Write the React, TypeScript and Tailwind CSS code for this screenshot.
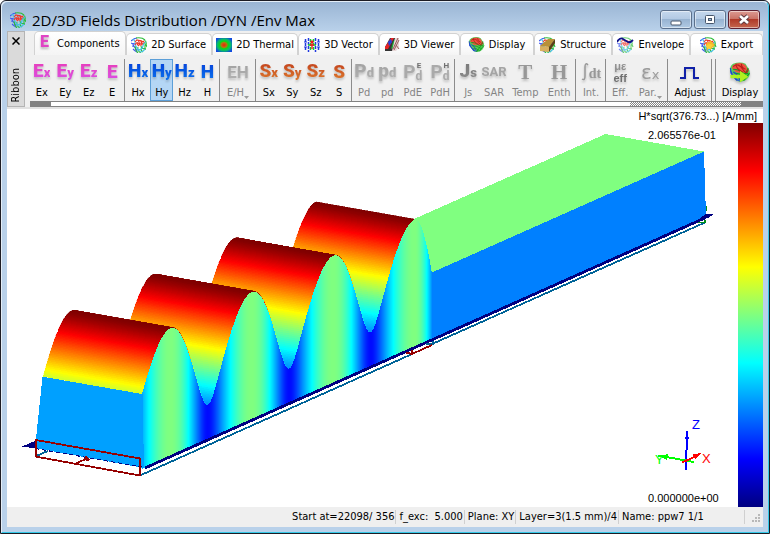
import type { ReactNode } from "react";

const UI_FONT = "font-['DejaVu_Sans_Condensed','Liberation_Sans',sans-serif]";

const App = () => (
  <div className={`min-h-screen flex flex-col rounded-t-md border border-[#1c1c24] bg-[#b9d1ea] text-[11px] leading-[14px] text-black ${UI_FONT}`}>
    <div className="flex-1 flex flex-col rounded-t-md border border-t-[#e4eef8] border-l-[#e4eef8] border-r-[#35c9e8] border-b-[#35c9e8] px-[5px] pb-[5px]">
      <TitleBar />
      <div className="flex-1 flex flex-col bg-[#f0f0f0]">
        <Ribbon />
        <Viewport />
        <StatusBar />
      </div>
    </div>
  </div>
);

const TitleBar = () => (
  <header className="-mx-[5px] flex h-[29px] items-start justify-between rounded-t-md bg-gradient-to-b from-[#9ab5d4] to-[#b9d1ea] pl-2 pr-2">
    <div className="flex items-center gap-[6px] pt-[7px]">
      <FieldIcon />
      <h1 className="font-['Open_Sans','Noto_Sans',sans-serif] text-[15px] leading-[22px] whitespace-nowrap">
        2D/3D Fields Distribution /DYN /Env Max
      </h1>
    </div>
    <div className="flex gap-[2px] pt-2">
      <WindowButton label="Minimize">
        <rect x="1" y="7" width="10" height="4" rx="1" fill="#fff" stroke="#46566c" />
      </WindowButton>
      <WindowButton label="Restore">
        <rect x="1.500" y="1.500" width="9" height="8" rx="1" fill="#fff" stroke="#46566c" />
        <rect x="4.500" y="4.500" width="3" height="2" fill="#9db6d2" stroke="#46566c" />
      </WindowButton>
      <WindowButton label="Close" danger>
        <path d="M2 2l8 7M10 2L2 9" stroke="#5c3a40" strokeWidth="4.500" />
        <path d="M2 2l8 7M10 2L2 9" stroke="#fff" strokeWidth="2.600" />
      </WindowButton>
    </div>
  </header>
);

const WindowButton = ({ label, danger, children }: { label: string; danger?: boolean; children: ReactNode }) => (
  <button
    aria-label={label}
    className={`flex h-[19px] w-8 items-center justify-center rounded-[3px] border shadow-[inset_0_0_0_1px_rgba(255,255,255,0.5)] ${
      danger
        ? "border-[#5e2030] bg-[linear-gradient(#dc9b92,#cb7467_45%,#b03a28_50%,#c4664e)]"
        : "border-[#5b708c] bg-[linear-gradient(#c5d8ed,#b3cae4_45%,#98b4d2_50%,#b0cae4)]"
    }`}
  >
    <svg width="12" height="12" viewBox="0 0 12 12" fill="none">{children}</svg>
  </button>
);

// Ribbon

const tabs: { label: string; width: string; icon: ReactNode }[] = [
  { label: "Components", width: "flex-[92]", icon: <TabLetter /> },
  { label: "2D Surface", width: "flex-[86]", icon: <FieldIcon /> },
  { label: "2D Thermal", width: "flex-[87]", icon: <ThermalIcon /> },
  { label: "3D Vector", width: "flex-[80]", icon: <VectorIcon /> },
  { label: "3D Viewer", width: "flex-[81]", icon: <ViewerIcon /> },
  { label: "Display", width: "flex-[74]", icon: <BallIcon /> },
  { label: "Structure", width: "flex-[78]", icon: <StructureIcon /> },
  { label: "Envelope", width: "flex-[78]", icon: <EnvelopeIcon /> },
  { label: "Export", width: "flex-[73]", icon: <ExportIcon /> },
];

const PINK = "bg-gradient-to-b from-[#e83cb8] to-[#d850e8]";
const BLUE = "bg-gradient-to-b from-[#0a3cd8] to-[#1478f0]";
const ORANGE = "bg-gradient-to-b from-[#c03c1c] to-[#e08030]";
const GRAY = "bg-gradient-to-b from-[#a0a0a0] to-[#b4b4b4]";
const DARK = "bg-gradient-to-b from-[#787878] to-[#909090]";

const Glyph = ({ main, sub, color }: { main: string; sub?: string; color: string }) => (
  <span className={`bg-clip-text text-transparent font-['Roboto',sans-serif] text-[19px] leading-5 font-black whitespace-nowrap ${color}`}>
    {main}
    {sub && <span className="text-[13px]">{sub}</span>}
  </span>
);

interface Tool {
  label: string;
  width: string;
  icon: ReactNode;
  disabled?: boolean;
  active?: boolean;
  menu?: boolean;
}

const groups: { width: string; tools: Tool[] }[] = [
  {
    width: "flex-[94]",
    tools: [
      { label: "Ex", width: "flex-[23]", icon: <Glyph main="E" sub="x" color={PINK} /> },
      { label: "Ey", width: "flex-[23]", icon: <Glyph main="E" sub="y" color={PINK} /> },
      { label: "Ez", width: "flex-[23]", icon: <Glyph main="E" sub="z" color={PINK} /> },
      { label: "E", width: "flex-[23]", icon: <Glyph main="E" color={PINK} /> },
    ],
  },
  {
    width: "flex-[93]",
    tools: [
      { label: "Hx", width: "flex-[24]", icon: <Glyph main="H" sub="x" color={BLUE} /> },
      { label: "Hy", width: "flex-[23]", icon: <Glyph main="H" sub="y" color={BLUE} />, active: true },
      { label: "Hz", width: "flex-[22]", icon: <Glyph main="H" sub="z" color={BLUE} /> },
      { label: "H", width: "flex-[23]", icon: <Glyph main="H" color={BLUE} /> },
    ],
  },
  {
    width: "flex-[34]",
    tools: [{ label: "E/H", width: "flex-1", icon: <EHIcon />, disabled: true, menu: true }],
  },
  {
    width: "flex-[94]",
    tools: [
      { label: "Sx", width: "flex-[23]", icon: <Glyph main="S" sub="x" color={ORANGE} /> },
      { label: "Sy", width: "flex-[23]", icon: <Glyph main="S" sub="y" color={ORANGE} /> },
      { label: "Sz", width: "flex-[23]", icon: <Glyph main="S" sub="z" color={ORANGE} /> },
      { label: "S", width: "flex-[23]", icon: <Glyph main="S" color={ORANGE} /> },
    ],
  },
  {
    width: "flex-[101]",
    tools: [
      { label: "Pd", width: "flex-[22]", icon: <Glyph main="P" sub="d" color={GRAY} />, disabled: true },
      { label: "pd", width: "flex-[24]", icon: <Glyph main="p" sub="d" color={GRAY} />, disabled: true },
      { label: "PdE", width: "flex-[27]", icon: <PowerIcon sup="E" />, disabled: true },
      { label: "PdH", width: "flex-[28]", icon: <PowerIcon sup="H" />, disabled: true },
    ],
  },
  {
    width: "flex-[119]",
    tools: [
      { label: "Js", width: "flex-[24]", icon: <Glyph main="J" sub="s" color={DARK} />, disabled: true },
      { label: "SAR", width: "flex-[27]", icon: <SarIcon />, disabled: true },
      { label: "Temp", width: "flex-[36]", icon: <SerifIcon letter="T" />, disabled: true },
      { label: "Enth", width: "flex-[32]", icon: <SerifIcon letter="H" />, disabled: true },
    ],
  },
  {
    width: "flex-[28]",
    tools: [{ label: "Int.", width: "flex-1", icon: <IntegralIcon />, disabled: true }],
  },
  {
    width: "flex-[60]",
    tools: [
      { label: "Eff.", width: "flex-[27]", icon: <EffIcon />, disabled: true },
      { label: "Par.", width: "flex-[35]", icon: <EpsilonIcon />, disabled: true, menu: true },
    ],
  },
  {
    width: "flex-[42]",
    tools: [{ label: "Adjust", width: "flex-1", icon: <PulseIcon /> }],
  },
  { width: "flex-[2]", tools: [] },
  {
    width: "flex-[46]",
    tools: [{ label: "Display", width: "flex-1", icon: <BallIcon arrow /> }],
  },
];

function Ribbon() {
  return (
    <section className="flex border-b-2 border-[#e2e2e2]">
      <div className="mr-[5px] flex w-[18px] flex-col items-center justify-between border border-[#b4b4b4] bg-[#dadada] py-[3px]">
        <button aria-label="Close ribbon" className="flex h-3 w-3 items-center justify-center">
          <svg width="8" height="8" viewBox="0 0 8 8" stroke="#000" strokeWidth="1.500">
            <path d="M0.500 0.500l7 7M7.500 0.500l-7 7" />
          </svg>
        </button>
        <span className="rotate-180 [writing-mode:vertical-rl]">Ribbon</span>
      </div>
      <div className="min-w-0 flex-1">
        <nav className="flex h-6 items-end pl-1">
          {tabs.map((tab, i) => (
            <button
              key={tab.label}
              className={`flex min-w-0 items-center justify-center gap-1 whitespace-nowrap rounded-t-[5px] border border-b-0 border-[#d2d2d2] ${tab.width} ${
                i === 0 ? "h-6 bg-gradient-to-b from-white to-[#f4f4f4]" : "h-[22px] border-b bg-gradient-to-b from-white via-white to-[#f4f4f4]"
              }`}
            >
              {tab.icon}
              {tab.label}
            </button>
          ))}
        </nav>
        <div className="flex h-[46px] pt-1">
          {groups.map((group, i) => (
            <div key={i} className={`flex min-w-0 ${group.width} ${i > 0 ? "border-l border-[#8c8c8c] pl-px" : ""}`}>
              {group.tools.map((tool) => (
                <ToolButton key={tool.label} {...tool} />
              ))}
            </div>
          ))}
        </div>
        <div className="flex h-[6px] border-y border-[#828282] bg-white">
          <div className="flex-[21] bg-[#828282]" />
          <div className="flex-[579]" />
          <div className="flex-[111] bg-[conic-gradient(#848484_25%,#fff_0_50%,#848484_0_75%,#fff_0)] bg-[length:2px_2px]" />
          <div className="flex-[22] bg-[#828282]" />
        </div>
      </div>
    </section>
  );
}

const ToolButton = ({ label, width, icon, disabled, active, menu }: Tool) => (
  <button
    disabled={disabled}
    className={`flex min-w-0 flex-col items-center justify-between border px-0 pt-[2px] ${width} ${
      active ? "border-[#5c9fd8] bg-[#b4d6f5]" : "border-transparent"
    } ${disabled ? "text-[#848484]" : ""}`}
  >
    <span aria-hidden className="flex h-5 items-center drop-shadow-[0_2px_1px_rgba(0,0,0,0.200)]">{icon}</span>
    <span className="flex items-end whitespace-nowrap">
      {label}
      {menu && (
        <svg width="5" height="5" viewBox="0 0 5 5" fill="#9a9a9a"><path d="M0 1h5L2.500 4z" /></svg>
      )}
    </span>
  </button>
);

// Icons

function TabLetter() {
  return (
    <span aria-hidden className="pr-1 pb-1 font-['Roboto',sans-serif] text-[16px] font-black text-[#e044c4] drop-shadow-[0_2px_1px_rgba(0,0,0,0.250)]">
      E
    </span>
  );
}

function FieldMesh() {
  return (
    <g fill="none" strokeWidth="1.100">
      <path d="M0 4q3-3 6-3M0 6q3 1 3 4M1 9q3 0 5 5M2 12q2 2 4 3M1 7q3-1 4 1" stroke="#4058f0" />
      <path d="M5 1q6-1 9 2M13 3q3 1 2 5M12 7q3-1 4 3M10 9q0 3 5 3M7 10q-1 4 3 6M4 9q0 4 3 7M11 11q-2 2 1 4M14 8v5" stroke="#2cbc38" />
      <path d="M1 3q3-1 3 2q0 4 4 9M15 5q-3 1-3 4q-1 4-5 4M9 15q3 0 5-3" stroke="#40c0e8" />
      <path d="M4 5q3-4 4 0q1 4 3 0q2-2 2 1M4 8q2-4 4-1q2 3 4-1M5 3q3 0 5 1t3 0M6 5q0 3 2 4M10 3q0 3 1 5" stroke="#f03828" />
    </g>
  );
}

function FieldIcon() {
  return (
    <svg className="shrink-0" width="16" height="16" viewBox="0 0 16 16"><FieldMesh /></svg>
  );
}

function ThermalIcon() {
  return (
    <svg className="shrink-0" width="16" height="16" viewBox="0 0 16 16">
      <defs>
        <radialGradient id="thermal" r="0.600">
          <stop offset="0" stopColor="#f02008" />
          <stop offset="0.300" stopColor="#b07810" />
          <stop offset="0.450" stopColor="#08d818" />
          <stop offset="0.700" stopColor="#08b870" />
          <stop offset="1" stopColor="#1048e0" />
        </radialGradient>
      </defs>
      <rect y="1" width="16" height="14" fill="url(#thermal)" />
    </svg>
  );
}

function VectorIcon() {
  return (
    <svg className="shrink-0" width="16" height="16" viewBox="0 0 16 16" fill="none">
      <path d="M1.500 2v12M4.500 1v14M11.500 1v14M14.500 2v12" stroke="#2038e0" strokeWidth="1.500" strokeDasharray="3 1" />
      <path d="M0 5h3M0 10h3M13 5h3M13 10h3" stroke="#2038e0" />
      <path d="M6.500 2v12M9.500 2v12M4 8h2M10 8h2" stroke="#18cc30" strokeWidth="1.500" strokeDasharray="3 1" />
      <path d="M8 4v8M6 8h4M6.500 5.500L8 4l1.500 1.500" stroke="#f01818" strokeWidth="1.300" />
    </svg>
  );
}

function ViewerIcon() {
  return (
    <svg className="shrink-0" width="16" height="16" viewBox="0 0 16 16">
      <path d="M6 1h9v8L9 14H1V10z" fill="#343434" />
      <path d="M7 1h3L4 12H1v-2z" fill="#e82020" />
      <path d="M4 5l3-3 1 3-3 4z" fill="#2040e0" />
      <path d="M9 5l2-3 1 3-3 6-2 1z" fill="#20b038" />
      <path d="M11 1h4v9l-3 4H8z" fill="#e8d8d8" />
      <path d="M14 1L9 12M15 3l-5 10M12 8l3 4" stroke="#985858" fill="none" />
    </svg>
  );
}

function BallIcon({ arrow }: { arrow?: boolean }) {
  return (
    <svg className="shrink-0" width={arrow ? 22 : 17} height={arrow ? 22 : 17} viewBox="0 0 16 16">
      <path d="M3 2q5-2 9 0l3 5q1 4-3 7-4 2-7 0L1 8Q0 4 3 2z" fill="#58cc58" />
      <path d="M1 6q2 6 8 9l-4-1-4-5z" fill="#3058e0" />
      <path d="M3 3q5-3 9 0l2 4q-4 3-9 1L2 5z" fill="#f05040" />
      <g fill="none" strokeWidth="0.800">
        <path d="M3 6q4 0 6 2t5 1M4 9q4 0 9 3M5 12q3-1 6 2M14 5q-2 5-6 10M15 9q-3 3-4 5" stroke="#10a020" />
        <path d="M3 4q4-3 7 2t4 0M5 2q0 4 5 6M9 2q0 3 3 4" stroke="#b82018" />
        <path d="M1 5q0 5 5 9M3 8q3 1 5 6" stroke="#2040d0" />
      </g>
      {arrow && <path d="M1 10h7V7l6 4.500-6 4v-3H1z" fill="#b0f020" />}
    </svg>
  );
}

function StructureIcon() {
  return (
    <svg className="shrink-0" width="17" height="16" viewBox="0 0 17 16">
      <FieldMesh />
      <path d="M1 9l8-7h7l-6 8z" fill="#b89038" />
      <path d="M1 9l9 1v5l-9-1z" fill="#d8b060" />
      <path d="M10 10l6-8v4l-6 9z" fill="#5c4018" />
    </svg>
  );
}

function EnvelopeIcon() {
  return (
    <svg className="shrink-0" width="17" height="16" viewBox="0 0 17 16" fill="none">
      <g opacity="0.700"><FieldMesh /></g>
      <path d="M0 5q3-5 6-3t5 3 5-2" stroke="#101088" strokeWidth="1.800" />
    </svg>
  );
}

function ExportIcon() {
  return (
    <svg className="shrink-0" width="17" height="16" viewBox="0 0 17 16">
      <FieldMesh />
      <path d="M6 8q0-3 4-3V3l5 5-5 5v-2q-2 0-3 3z" fill="#f8b828" />
      <path d="M7 8q3-2 6 0l-3 4-3-1z" fill="#fad038" />
    </svg>
  );
}

function EHIcon() {
  return (
    <span className={`bg-clip-text text-transparent font-['Roboto',sans-serif] text-[17px] leading-5 font-bold ${GRAY}`}>EH</span>
  );
}

function PowerIcon({ sup }: { sup: string }) {
  return (
    <span className="flex items-center font-['Roboto',sans-serif] font-bold text-[#aaaaaa]">
      <span className="text-[19px] leading-5">P</span>
      <span className="flex flex-col text-center">
        <span className="text-[8px] leading-[9px] text-[#707070]">{sup}</span>
        <span className="text-[12px] leading-[13px]">d</span>
      </span>
    </span>
  );
}

function SarIcon() {
  return (
    <span className="font-['Liberation_Sans_Narrow','Roboto',sans-serif] text-[13px] font-bold text-[#a4a4a4]">SAR</span>
  );
}

function SerifIcon({ letter }: { letter: string }) {
  return (
    <span className="font-['Liberation_Serif',serif] text-[21px] leading-5 font-bold text-[#989898]">{letter}</span>
  );
}

function IntegralIcon() {
  return (
    <span className="flex items-center text-[#989898]">
      <svg width="8" height="20" viewBox="0 0 8 20" fill="none" stroke="currentColor" strokeWidth="1.500">
        <path d="M7 3q-3-3-3 2v9q0 5-3 3" />
      </svg>
      <span className="pt-1 font-['Liberation_Serif',serif] text-[14px] font-bold">dt</span>
    </span>
  );
}

function EffIcon() {
  return (
    <span className="flex flex-col items-center font-['Liberation_Sans',sans-serif] text-[11px] leading-3 font-bold text-[#909090]">
      <span>με</span>
      <span className="text-[#707070]">eff</span>
    </span>
  );
}

function EpsilonIcon() {
  return (
    <span className="font-['DejaVu_Sans',sans-serif] text-[#9c9c9c]">
      <span className="text-[20px] leading-5">ε</span>
      <span className="text-[13px]">x</span>
    </span>
  );
}

function PulseIcon() {
  return (
    <svg width="20" height="16" viewBox="0 0 20 16" fill="none" stroke="#1020a8" strokeWidth="2">
      <path d="M0 14h5V4h9v10h5" />
    </svg>
  );
}

// Field plot

const PEAK = 128;
const PERIOD = 81.4;
const CREST = 168.7;
const START = 142;
const END = 432;
const LAST_CREST = 415;
const BACK = [-99, -17.4];

const clamp = (v: number) => Math.max(0, Math.min(1, v));

// Standard jet colour map, v in 0..1
const jet = (v: number) => {
  const channel = (center: number) => Math.round(255 * clamp(1.5 - Math.abs(4 * v - center)));
  return `rgb(${channel(3)},${channel(2)},${channel(1)})`;
};

const baseline = (x: number) => 467.5 - 0.4455 * (x - 145);

// Field envelope above the base plane
const height = (x: number) => {
  if (x > LAST_CREST) {
    const t = (x - LAST_CREST) / (END - LAST_CREST);
    return 66 + 62 * (1 - Math.pow(t, 1.8));
  }
  // crests lean slightly to the right
  const skewed = x - 1.5 * Math.cos((2 * Math.PI * (x - CREST)) / PERIOD);
  const phase = ((skewed - CREST) * Math.PI) / PERIOD;
  return PEAK * Math.sqrt(Math.cos(phase) ** 2 + (0.27 * Math.sin(phase)) ** 2);
};

const strips: { points: string; fill: string }[] = [];
for (let x = LAST_CREST; x > START; x -= 0.5) {
  const left = x - 0.5;
  const y0 = baseline(left) - height(left);
  const y1 = baseline(x) - height(x);
  strips.push({
    points: `${left},${y0} ${x},${y1} ${x + BACK[0]},${y1 + BACK[1]} ${left + BACK[0]},${y0 + BACK[1]}`,
    fill: jet(height(left) / PEAK),
  });
}

const columns: { points: string; fill: string }[] = [];
for (let x = START; x < END; x += 1) {
  columns.push({
    points: `${x},${baseline(x) - height(x)} ${x + 1},${baseline(x + 1) - height(x + 1)} ${x + 1},${baseline(x + 1)} ${x},${baseline(x)}`,
    fill: jet(height(x + 0.5) / PEAK / 2),
  });
}

const startTop = baseline(START) - height(START);

function FieldPlot() {
  return (
    <svg className="min-w-0 flex-1" viewBox="7 123 731 384" preserveAspectRatio="xMidYMid meet" role="img" aria-label="Field distribution">
      <g shapeRendering="crispEdges">
        <polygon points="414,219 605.500,134 704,151.500 432,273" fill={jet(0.5)} />
        {strips.map((s, i) => (
          <polygon key={i} points={s.points} fill={s.fill} stroke={s.fill} strokeWidth="0.300" />
        ))}
        <polygon points="432,272.500 704,151.500 706,217 432,340" fill={jet(0.25)} />
        {columns.map((c, i) => (
          <polygon key={i} points={c.points} fill={c.fill} />
        ))}
        <polygon points={`42.500,${startTop + BACK[1]} 142.500,${startTop} 144,468 35,448`} fill="#00a0ff" />

        {/* base plane edges */}
        <polygon points="22,446.500 35,441 35,448.500" fill="#000080" />
        <path d="M35 448.500L145 467.500" stroke="#000080" strokeDasharray="4 3" />
        <path d="M145 468L706 217.500" stroke="#000080" strokeWidth="2.800" />
        <polygon points="700,218 706,214 713,214.500 708,218" fill="#000080" />
        <g fill="none" stroke="#006498" strokeWidth="1.800">
          <path d="M140 475.500L411 354.500M432 344L705 222.500" />
          <path d="M36 456L48 451M426 344h7v-3" />
        </g>
        <g fill="none" stroke="#960000" strokeWidth="1.800">
          <path d="M36 456.500V440L140 458.500V475.500L35 456.500" />
          <path d="M76 463.500L88 458" />
          <path d="M406 352.500L412 354L432 345M412 350v4" />
        </g>
        <polygon points="84,459 86,455 90,460 87,461" fill="#960000" />
        <path d="M706.500 206v5M698 222.500h7v-3" stroke="#008c18" fill="none" strokeWidth="1.500" />

        {/* axes */}
        <g fill="none" strokeWidth="2">
          <path d="M686 470L687 431" stroke="#0000ff" />
          <path d="M694 462L658 455.500" stroke="#00ff00" />
          <path d="M682 462.500L699 455" stroke="#ff0000" />
        </g>
        <polygon points="687,430 689,439 685,439" fill="#0000ff" />
        <polygon points="660,456.500 668,454 667,460" fill="#00ff00" />
        <polygon points="701,453 693,454.500 695,459" fill="#ff0000" />
      </g>
      <g className="font-['Liberation_Sans',sans-serif] text-[13px]">
        <text x="692" y="429" fill="#0000ff">Z</text>
        <text x="655" y="464" fill="#00ff00">Y</text>
        <text x="702" y="463" fill="#ff0000">X</text>
      </g>
      <g className="font-['Liberation_Sans',sans-serif] text-[11px]">
        <text x="648" y="139">2.065576e-01</text>
        <text x="648" y="502">0.000000e+00</text>
      </g>
    </svg>
  );
}

function Viewport() {
  return (
    <main className="flex flex-1 flex-col bg-white">
      <p className="h-[14px] pr-[6px] text-right font-['Liberation_Sans',sans-serif]">H*sqrt(376.73...) [A/mm]</p>
      <div className="flex flex-1">
        <FieldPlot />
        <div className="w-[25px] bg-[linear-gradient(#800000,#ff0000_12.5%,#ffff00_37.5%,#00ffff_62.5%,#0000ff_87.5%,#000080)]" />
      </div>
    </main>
  );
}

function StatusBar() {
  return (
    <footer className="flex h-5 items-center bg-[#efefef] py-[2px] whitespace-pre">
      <span className="flex-1 border-r border-[#d0d0d0] pr-px text-right">Start at=22098/ 356</span>
      <span className="border-r border-[#d0d0d0] pr-px pl-[3px]">f_exc:  5.000</span>
      <span className="border-r border-[#d0d0d0] pr-px pl-[3px]">Plane: XY</span>
      <span className="border-r border-[#d0d0d0] pr-px pl-[3px]">Layer=3(1.5 mm)/4</span>
      <span className="w-[126px] border-r border-[#d0d0d0] pl-[3px]">Name: ppw7 1/1</span>
      <svg className="ml-[6px] self-end" width="12" height="12" viewBox="0 0 12 12" fill="#b8b8b8">
        <path d="M7 1h2v2H7zM4 4h2v2H4zM7 4h2v2H7zM1 7h2v2H1zM4 7h2v2H4zM7 7h2v2H7z" />
      </svg>
    </footer>
  );
}

export default App;
